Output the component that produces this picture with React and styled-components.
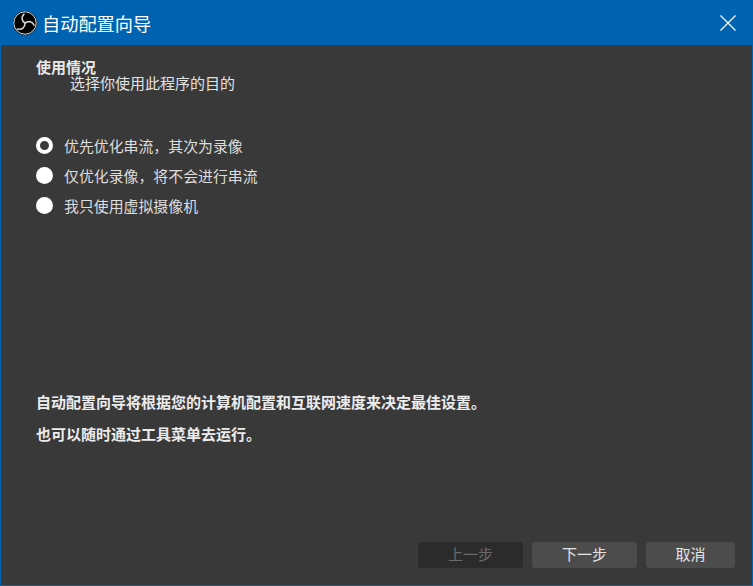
import React from "react";
import styled, { createGlobalStyle } from "styled-components";

const Global = createGlobalStyle`
  html, body { margin: 0; padding: 0; background: #3a393a; }
  body { font-family: "Noto Sans CJK SC", "Noto Sans", sans-serif; }
  * { box-sizing: border-box; }
`;

const Win = styled.div`
  width: 753px; height: 586px; display: flex; flex-direction: column;
  background: #3a393a; border: 1px solid #0063b1; border-top: 0; overflow: hidden;
`;
const TitleBar = styled.header`
  height: 45px; flex: none; background: #0063b1; display: flex; align-items: center;
  padding: 0 16px 0 12px; color: #fff;
`;
const Title = styled.h1`
  margin: 0 0 0 5px; font-size: 18.2px; font-weight: 400; line-height: 24px; flex: 1;
`;
const Body = styled.main`
  flex: 1; display: flex; flex-direction: column; padding: 14px 17px 17px 35px; color: #eee;
`;
const Heading = styled.div`
  font-family: "Liberation Sans", "Noto Sans CJK SC", sans-serif;
  font-size: 15px; font-weight: 700; line-height: 17px; color: #e8e8e8;
`;
const Sub = styled.div`
  font-family: "Liberation Sans", "Noto Sans CJK SC", sans-serif;
  font-size: 15px; line-height: 16px; margin-left: 34px; color: #e2e2e2;
`;
const Options = styled.div`
  display: flex; flex-direction: column; gap: 8px; margin-top: 42px;
`;
const Option = styled.label`
  display: flex; align-items: center; gap: 11px; height: 22px; font-size: 14.9px; color: #dedede;
`;
const Radio = styled.span`
  width: 17px; height: 17px; border-radius: 50%; flex: none;
  background: ${p => (p.$checked ? "#3a393a" : "#fff")};
  border: ${p => (p.$checked ? "4.5px solid #fff" : "0")};
`;
const Notes = styled.div`
  margin-top: auto; display: flex; flex-direction: column; gap: 10px; margin-bottom: 97px;
`;
const Note = styled.p`
  margin: 0; font-size: 15px; font-weight: 700; line-height: 22px; color: #ececec;
`;
const Footer = styled.footer`
  display: flex; justify-content: flex-end; gap: 9px;
`;
const Btn = styled.button`
  width: ${p => p.$w}px; height: 26px; padding: 0 0 2px; border: 0; border-radius: 3px;
  font: 400 15px "Noto Sans CJK SC", sans-serif; line-height: 24px;
  background: ${p => (p.disabled ? "#2c2b2c" : "#4c4c4c")};
  color: ${p => (p.disabled ? "#6b6b6b" : "#e4e4e4")};
`;

const Logo = () => (
  <svg width="24" height="24" viewBox="0 0 24 24">
    <circle cx="12" cy="12" r="12" fill="#000" />
    <circle cx="12" cy="12" r="11.2" fill="none" stroke="#e0e0e0" strokeWidth="1" />
    <g fill="none" stroke="#d4d4d4" strokeWidth="1.6" strokeLinecap="round">
      <path d="M12 12C8.500 10 8 6 11 3.200" />
      <path d="M12 12C15.500 9.500 19.500 10.500 21 14" />
      <path d="M12 12C12 16.500 9 19 4.500 18" />
    </g>
  </svg>
);
const Close = () => (
  <svg width="16" height="16" viewBox="0 0 16 16">
    <path d="M.5.5l15 15M15.500.5l-15 15" stroke="#fff" strokeWidth="1.2" fill="none" />
  </svg>
);

export default function App() {
  return (
    <Win>
      <Global />
      <TitleBar>
        <Logo />
        <Title>自动配置向导</Title>
        <Close />
      </TitleBar>
      <Body>
        <Heading>使用情况</Heading>
        <Sub>选择你使用此程序的目的</Sub>
        <Options>
          <Option><Radio $checked />优先优化串流，其次为录像</Option>
          <Option><Radio />仅优化录像，将不会进行串流</Option>
          <Option><Radio />我只使用虚拟摄像机</Option>
        </Options>
        <Notes>
          <Note>自动配置向导将根据您的计算机配置和互联网速度来决定最佳设置。</Note>
          <Note>也可以随时通过工具菜单去运行。</Note>
        </Notes>
        <Footer>
          <Btn $w={105} disabled>上一步</Btn>
          <Btn $w={105}>下一步</Btn>
          <Btn $w={89}>取消</Btn>
        </Footer>
      </Body>
    </Win>
  );
}
